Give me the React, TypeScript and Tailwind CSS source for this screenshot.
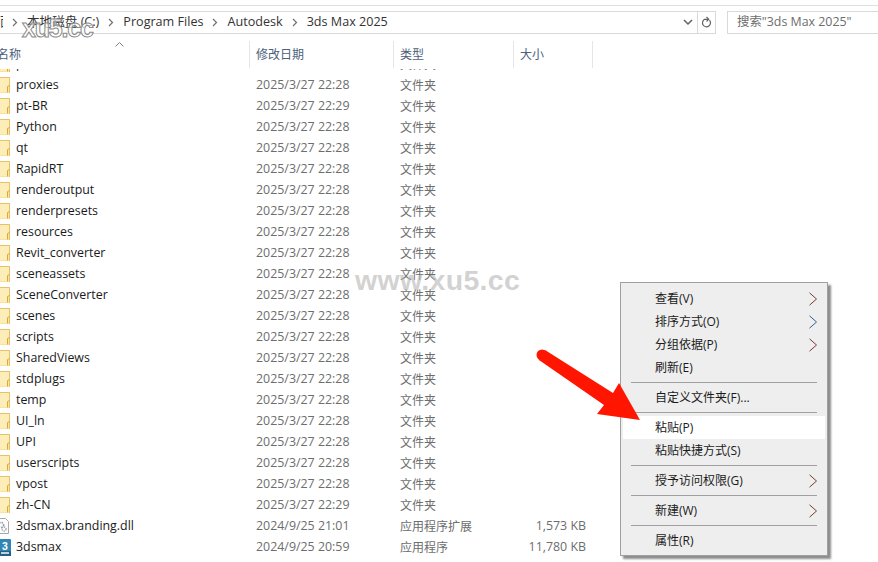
import React from "react";

type Row = {
  name: string;
  date: string;
  type: string;
  size?: string;
  icon?: "folder" | "dll" | "max";
};

const folderNames = [
  "presets",
  "proxies",
  "pt-BR",
  "Python",
  "qt",
  "RapidRT",
  "renderoutput",
  "renderpresets",
  "resources",
  "Revit_converter",
  "sceneassets",
  "SceneConverter",
  "scenes",
  "scripts",
  "SharedViews",
  "stdplugs",
  "temp",
  "UI_ln",
  "UPI",
  "userscripts",
  "vpost",
  "zh-CN",
];

const rows: Row[] = [
  ...folderNames.map((name) => ({
    name,
    date: name === "pt-BR" || name === "zh-CN" ? "2025/3/27 22:29" : "2025/3/27 22:28",
    type: "文件夹",
    icon: "folder" as const,
  })),
  { name: "3dsmax.branding.dll", date: "2024/9/25 21:01", type: "应用程序扩展", size: "1,573 KB", icon: "dll" },
  { name: "3dsmax", date: "2024/9/25 20:59", type: "应用程序", size: "11,780 KB", icon: "max" },
];

const crumbs = ["本地磁盘 (C:)", "Program Files", "Autodesk", "3ds Max 2025"];

const FileIcon = ({ icon }: { icon?: Row["icon"] }) => {
  if (icon === "dll") {
    return (
      <svg width="16" height="16" viewBox="0 0 16 16" className="shrink-0">
        <path d="M-1 .5h12.5l3 3v12H-1z" fill="#fdfdfd" stroke="#a8a8a8" />
        <circle cx="7" cy="7" r="2.6" fill="none" stroke="#8f9aa5" strokeWidth="1.6" strokeDasharray="1.5 1" />
        <circle cx="10" cy="11" r="2" fill="none" stroke="#9aa4ad" strokeWidth="1.4" strokeDasharray="1.2 .9" />
      </svg>
    );
  }
  if (icon === "max") {
    return (
      <svg width="17" height="17" viewBox="0 0 17 17" className="shrink-0">
        <rect x="0" y="0" width="17" height="17" rx="1" fill="#2f86b4" />
        <rect x="0" y="12" width="17" height="5" fill="#1f6288" />
        <rect x="7" y="13" width="8" height="2" fill="#c4d0d6" />
        <text x="11" y="10.5" fontSize="10.5" fontWeight="700" fill="#ffffff" textAnchor="middle" fontFamily="Liberation Sans">
          3
        </text>
      </svg>
    );
  }
  return (
    <svg width="16" height="16" viewBox="0 0 16 16" className="shrink-0">
      <path d="M0 0h16v16H0z" fill="#fbe39a" />
      <path d="M0 .5h15.5v15.5" fill="none" stroke="#e6c265" />
      <path d="M0 1h15v8l-2 1v5H0z" fill="#fdeeb9" />
      <path d="M13.5 15.5v-6l2-1" fill="none" stroke="#d9a93f" />
    </svg>
  );
};

const Chevron = ({ color = "#4b4b4b" }: { color?: string }) => (
  <svg width="10" height="14" viewBox="0 0 10 14" fill="none" className="shrink-0">
    <path d="M1.5 .8 8.5 7l-7 6.2" stroke={color} strokeWidth="1" />
  </svg>
);

const CrumbArrow = () => (
  <svg width="6" height="9" viewBox="0 0 6 9" fill="none" className="shrink-0">
    <path d="M1 1l3.5 3.5L1 8" stroke="#707070" strokeWidth="1.2" />
  </svg>
);

const Sep = () => <div className="mx-[8px] my-[3px] h-px bg-[#a0a0a0]" />;

const MenuItem = ({
  label,
  sub,
  active,
}: {
  label: string;
  sub?: string;
  active?: boolean;
}) => (
  <div
    className={`flex h-[23px] items-center justify-between pl-[32px] pr-[7px] ${active ? "bg-white" : ""}`}
  >
    <span>{label}</span>
    {sub ? <Chevron color={sub} /> : null}
  </div>
);

const App: React.FC = () => {
  return (
    <div className="relative h-[562px] w-[878px] overflow-hidden bg-white font-['Open_Sans','Noto_Sans_CJK_SC',sans-serif] text-[12px] text-[#1a1a1a]">
      <div className="h-[5px]" />
      <div className="h-px bg-[#e0e0e0]" />

      <div className="mt-[5px] flex h-[23px] items-stretch">
        <div className="flex w-[716px] items-center border border-l-0 border-[#d9d9d9] text-[12.6px] text-[#333333]">
          <span className="w-[3px] overflow-hidden">面</span>
          <div className="ml-[9px] flex items-center gap-[9px]">
            <CrumbArrow />
            {crumbs.map((c, i) => (
              <React.Fragment key={c}>
                <span>{c}</span>
                {i < crumbs.length - 1 ? <CrumbArrow /> : null}
              </React.Fragment>
            ))}
          </div>
          <div className="ml-auto flex h-full items-center">
            <svg width="10" height="7" viewBox="0 0 10 7" fill="none" className="mr-[4px]">
              <path d="M1 1l4 4 4-4" stroke="#606060" strokeWidth="1.5" />
            </svg>
            <div className="flex h-full w-[18px] items-center justify-center border-l border-[#d9d9d9]">
              <svg width="11" height="13" viewBox="0 0 11 13" fill="none">
                <path d="M8.5 4.2A4 4 0 1 1 3.6 3.3H7" stroke="#606060" strokeWidth="1.2" />
                <path d="M5.5 1 7.7 3.3 5.5 5.5" stroke="#606060" strokeWidth="1.1" />
              </svg>
            </div>
          </div>
        </div>
        <div className="ml-[11px] flex flex-1 items-center border border-r-0 border-[#d9d9d9] pl-[9px] text-[12.4px] text-[#6d6d6d]">
          搜索"3ds Max 2025"
        </div>
      </div>

      <div className="relative mt-[7px] flex h-[28px] text-[#4c607a]">
        <svg width="9" height="5" viewBox="0 0 9 5" fill="none" className="absolute left-[115px] top-[1px]">
          <path d="M.5 4.5l4-4 4 4" stroke="#808080" />
        </svg>
        <div className="flex h-[27px] w-[250px] items-center border-r border-[#e5e5e5]">
          <span className="-ml-[3px]">名称</span>
        </div>
        <div className="flex h-[27px] w-[144px] items-center border-r border-[#e5e5e5] pl-[6px]">修改日期</div>
        <div className="flex h-[27px] w-[120px] items-center border-r border-[#e5e5e5] pl-[6px]">类型</div>
        <div className="flex h-[27px] w-[79px] items-center border-r border-[#e5e5e5] pl-[6px]">大小</div>
      </div>

      <div className="h-[488px] overflow-hidden">
        <div className="-mt-[15px]">
          {rows.map((r) => (
            <div key={r.name} className="flex h-[21px] items-center">
              <div className="flex w-[250px] items-center text-[12.4px]">
                <div className={`flex ${r.icon === "max" ? "-ml-[6px] mr-[5px]" : "-ml-[6px] mr-[6px]"}`}>
                  <FileIcon icon={r.icon} />
                </div>
                <span>{r.name}</span>
              </div>
              <div className="w-[150px] pl-[6px] text-[12.4px] text-[#6d6d6d]">{r.date}</div>
              <div className="w-[114px] text-[#6d6d6d]">{r.type}</div>
              <div className="w-[72px] text-right text-[12.4px] text-[#6d6d6d]">{r.size}</div>
            </div>
          ))}
        </div>
      </div>

      {/* watermarks */}
      <div className="absolute left-[22px] top-[15px] font-['Liberation_Sans',sans-serif] text-[25px] font-bold leading-[26px] tracking-[-1.2px] text-white/70 [-webkit-text-stroke:1px_#8a8a8a]">
        xu5.cc
      </div>
      <div className="absolute left-[355px] top-[263px] font-['Liberation_Sans',sans-serif] text-[28.5px] font-bold leading-[34px] tracking-[0.3px] text-[#b4b4b4]/60">
        www.xu5.cc
      </div>

      {/* context menu */}
      <div className="absolute left-[620px] top-[282px] w-[208px] border border-[#a0a0a0] bg-[#eeeeee] px-[2px] pb-[3px] pt-[4px] shadow-[3px_3px_2px_rgba(0,0,0,0.45)]">
        <MenuItem label="查看(V)" sub="#7a3b30" />
        <MenuItem label="排序方式(O)" sub="#2f5f8f" />
        <MenuItem label="分组依据(P)" sub="#7a3b30" />
        <MenuItem label="刷新(E)" />
        <Sep />
        <MenuItem label="自定义文件夹(F)..." />
        <Sep />
        <MenuItem label="粘贴(P)" active />
        <MenuItem label="粘贴快捷方式(S)" />
        <Sep />
        <MenuItem label="授予访问权限(G)" sub="#7a3b30" />
        <Sep />
        <MenuItem label="新建(W)" sub="#7a3b30" />
        <Sep />
        <MenuItem label="属性(R)" />
      </div>

      {/* red arrow */}
      <svg className="absolute left-0 top-0" width="878" height="562" viewBox="0 0 878 562">
        <circle cx="542" cy="355" r="5.5" fill="#ff1500" />
        <path d="M545 350 613 393 619 383 640 420 597 414 604 405 539 360z" fill="#ff1500" />
      </svg>
    </div>
  );
};

export default App;
